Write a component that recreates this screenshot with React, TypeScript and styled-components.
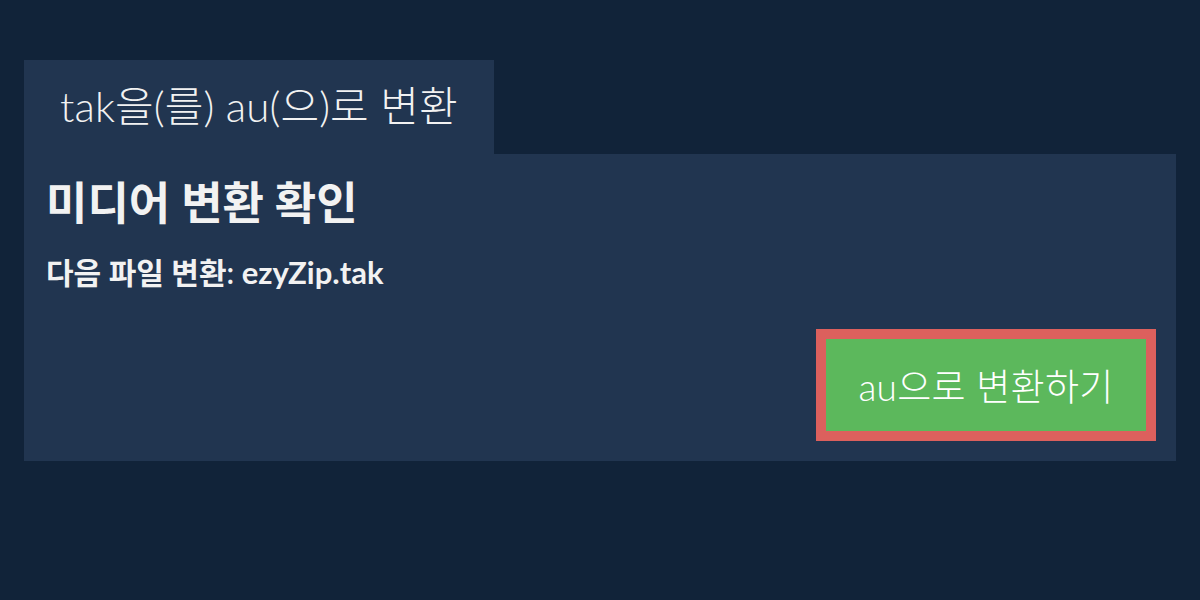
import React from "react";
import styled, { createGlobalStyle } from "styled-components";

const GlobalStyle = createGlobalStyle`
  html, body {
    margin: 0;
    padding: 0;
    background: #112339;
  }
  body {
    font-family: Lato, "Noto Sans CJK KR", sans-serif;
    color: #f2f2f2;
  }
`;

const Page = styled.div`
  width: 1200px;
  height: 600px;
  padding: 60px 24px 0;
  box-sizing: border-box;
  display: flex;
  flex-direction: column;
`;

const Tab = styled.div`
  align-self: flex-start;
  width: 470px;
  height: 94px;
  box-sizing: border-box;
  padding: 0 0 8px 36px;
  background: #213550;
  display: flex;
  align-items: center;
  font-size: 42px;
  font-weight: 300;
  letter-spacing: 0.1px;
  white-space: nowrap;
`;

const Panel = styled.section`
  height: 307px;
  box-sizing: border-box;
  padding: 20px 20px 20px 22px;
  background: #213550;
  display: flex;
  flex-direction: column;
`;

const Heading = styled.h1`
  margin: 0;
  font-size: 45px;
  font-weight: 700;
  line-height: 58px;
`;

const FileLine = styled.p`
  margin: 20px 0 0;
  font-size: 30px;
  font-weight: 600;
  line-height: 40px;
`;

const FileName = styled.strong`
  font-weight: 700;
  font-size: 31px;
`;

const Actions = styled.div`
  margin-top: auto;
  display: flex;
  justify-content: flex-end;
`;

const ConvertButton = styled.button`
  width: 340px;
  height: 112px;
  box-sizing: border-box;
  border: 10px solid #dc605d;
  background: #5cb85c;
  color: #ffffff;
  font-family: inherit;
  font-size: 37px;
  font-weight: 300;
  letter-spacing: 0.3px;
  cursor: pointer;
`;

export default function App() {
  return (
    <>
      <GlobalStyle />
      <Page>
        <Tab>tak을(를) au(으)로 변환</Tab>
        <Panel>
          <Heading>미디어 변환 확인</Heading>
          <FileLine>
            다음 파일 변환: <FileName>ezyZip.tak</FileName>
          </FileLine>
          <Actions>
            <ConvertButton>au으로 변환하기</ConvertButton>
          </Actions>
        </Panel>
      </Page>
    </>
  );
}
